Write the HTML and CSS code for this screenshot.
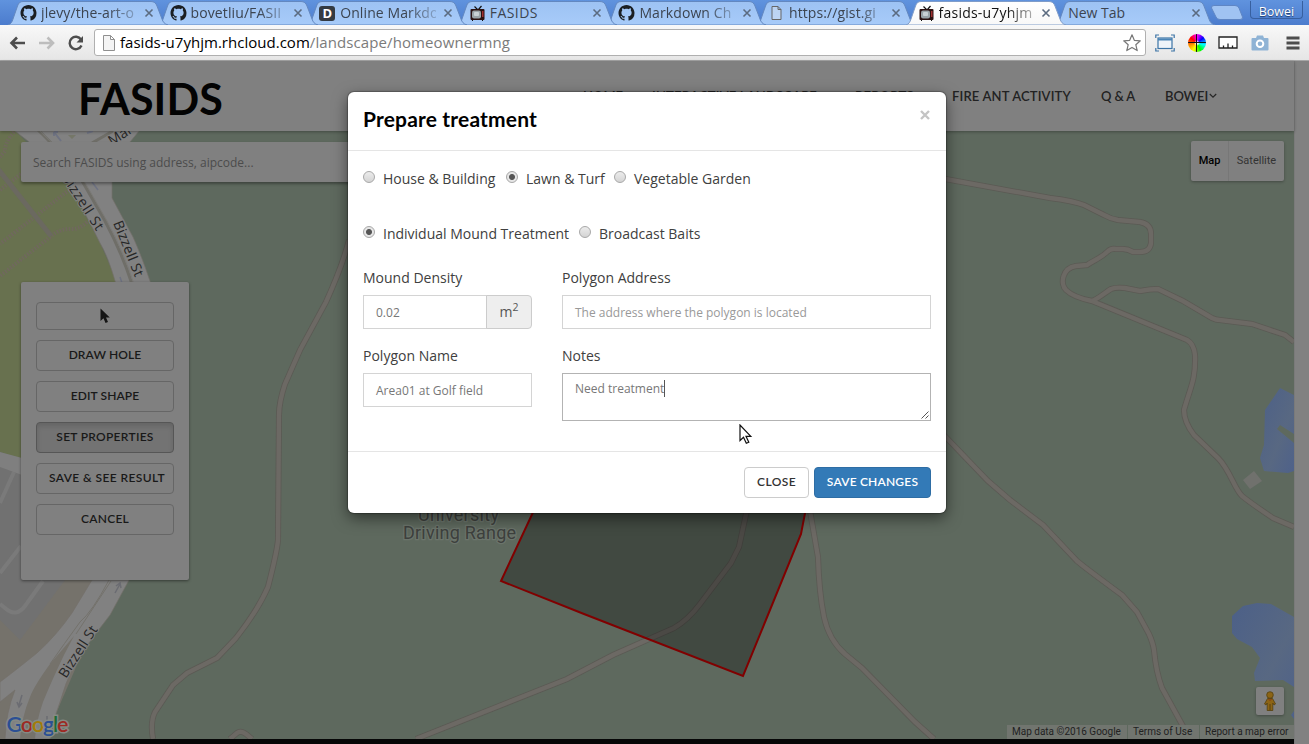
FILE: index.html
```html
<!DOCTYPE html>
<html lang="en">
<head>
<meta charset="utf-8">
<title>FASIDS</title>
<link rel="stylesheet" href="styles.css">
</head>
<body>
<svg class="defs" width="0" height="0">
  <defs>
    <linearGradient id="tabFill" x1="0" y1="0" x2="0" y2="1"><stop offset="0" stop-color="#9dc2f3"/><stop offset="1" stop-color="#a7cbf9"/></linearGradient>
    <linearGradient id="tabOn" x1="0" y1="0" x2="0" y2="1"><stop offset="0" stop-color="#ffffff"/><stop offset="1" stop-color="#f8f8f8"/></linearGradient>
    <symbol id="shape" viewBox="0 0 160 25"><path d="M0 25C3 24 4 22 5 19L9.500 6C10.500 3 12 1.500 15 1.500H143C146 1.500 148 3 149 6L154 19C155 22 156.500 24 160 25Z"/></symbol>
    <symbol id="github" viewBox="0 0 16 16"><path fill="#1b1f23" d="M8 0C3.580 0 0 3.580 0 8c0 3.540 2.290 6.530 5.470 7.590.4.070.55-.17.55-.38 0-.19-.01-.82-.01-1.490-2.010.37-2.530-.49-2.690-.94-.09-.23-.48-.94-.82-1.130-.28-.15-.68-.52-.01-.53.63-.01 1.080.58 1.230.82.72 1.210 1.870.87 2.330.66.07-.52.28-.87.51-1.070-1.780-.2-3.640-.89-3.640-3.950 0-.87.31-1.590.82-2.150-.08-.2-.36-1.020.08-2.120 0 0 .67-.21 2.200.82.64-.18 1.320-.27 2-.27s1.360.09 2 .27c1.530-1.040 2.200-.82 2.200-.82.44 1.100.16 1.920.08 2.120.51.56.82 1.270.82 2.150 0 3.070-1.870 3.750-3.650 3.950.29.25.54.73.54 1.480 0 1.070-.01 1.930-.01 2.200 0 .21.15.46.55.38A8.010 8.010 0 0 0 16 8c0-4.420-3.580-8-8-8z"/></symbol>
    <symbol id="tv" viewBox="0 0 16 16"><path d="M8 4.500L5 1.500M9 4.500L12 1" stroke="#111" stroke-width="1.200"/><rect x="1" y="4" width="14" height="11" rx="1" fill="#2a1010"/><rect x="2.500" y="5.500" width="9" height="8" rx="2" fill="#9aa3a8"/><rect x="4.500" y="7" width="5" height="4" rx="1" fill="#c9d0d4"/><rect x="12.500" y="6" width="1.500" height="6" fill="#a03030"/><path d="M3 15v1M13 15v1" stroke="#111"/></symbol>
    <symbol id="sheet" viewBox="0 0 16 16"><path d="M3.500 1.500H9.500L12.500 4.500V14.500H3.500ZM9.500 1.500V4.500H12.500" fill="#eee" fill-opacity=".35" stroke="#666"/></symbol>
    <symbol id="x" viewBox="0 0 10 10"><path d="M1.500 1.500L8.500 8.500M8.500 1.500L1.500 8.500" stroke="#5b6b80" stroke-width="1.600"/></symbol>
    <symbol id="caret" viewBox="0 0 8 6"><path d="M.8 1L4 4.200L7.200 1" fill="none" stroke="#262626" stroke-width="1.200"/></symbol>
  </defs>
</svg>
<div class="browser">
  <div class="tabstrip">
    <div class="tab t1"><svg class="shape"><use href="#shape"/></svg><svg class="fav"><use href="#github"/></svg><span class="title fade">jlevy/the-art-o</span><svg class="close"><use href="#x"/></svg></div>
    <div class="tab t2"><svg class="shape"><use href="#shape"/></svg><svg class="fav"><use href="#github"/></svg><span class="title fade">bovetliu/FASII</span><svg class="close"><use href="#x"/></svg></div>
    <div class="tab t3"><svg class="shape"><use href="#shape"/></svg><span class="fav letter">D</span><span class="title fade">Online Markdo</span><svg class="close"><use href="#x"/></svg></div>
    <div class="tab t4"><svg class="shape"><use href="#shape"/></svg><svg class="fav"><use href="#tv"/></svg><span class="title wide">FASIDS</span><svg class="close"><use href="#x"/></svg></div>
    <div class="tab t5"><svg class="shape"><use href="#shape"/></svg><svg class="fav"><use href="#github"/></svg><span class="title fade">Markdown Ch</span><svg class="close"><use href="#x"/></svg></div>
    <div class="tab t6"><svg class="shape"><use href="#shape"/></svg><svg class="fav"><use href="#sheet"/></svg><span class="title fade">https://gist.gi</span><svg class="close"><use href="#x"/></svg></div>
    <div class="tab t7 on"><svg class="shape"><use href="#shape"/></svg><svg class="fav"><use href="#tv"/></svg><span class="title fade">fasids-u7yhjm</span><svg class="close"><use href="#x"/></svg></div>
    <div class="tab t8 blank"><svg class="shape"><use href="#shape"/></svg><span class="title">New Tab</span><svg class="close"><use href="#x"/></svg></div>
    <svg class="plus" width="34" height="18" viewBox="0 0 34 18"><path d="M4 1.500H25Q28 1.500 29 4L32.500 13Q33 15.500 30 15.500H10Q7 15.500 6 13L1.500 4Q1 1.500 4 1.500Z" fill="#a0c3f2" stroke="#5f86c4"/></svg>
    <span class="profile">Bowei</span>
  </div>
  <div class="toolbar">
    <svg class="nav-ico" width="90" height="24" viewBox="0 0 90 24" fill="none">
      <path d="M25 12H12M17 6.500L11.500 12L17 17.500" stroke="#4d4d4d" stroke-width="2.600"/>
      <path d="M39 12H52M47.500 6.500L53 12L47.500 17.500" stroke="#bdbdbd" stroke-width="2.600"/>
      <path d="M81 8.500A6.200 6.200 0 1 0 81.500 14.500" stroke="#4d4d4d" stroke-width="2.400"/><path d="M83 5V11.500H76.500Z" fill="#4d4d4d"/>
    </svg>
    <div class="omnibox">
      <svg width="14" height="18" viewBox="0 0 14 18"><path d="M1.500 1.500H8.500L12.500 5.500V16.500H1.500ZM8.500 1.500V5.500H12.500" fill="#f4f4f4" stroke="#8f8f8f"/></svg>
      <span class="url"><b>fasids-u7yhjm.rhcloud.com</b>/landscape/homeownermng</span>
      <svg width="20" height="20" viewBox="0 0 20 20"><path d="M10 1.800L12.300 7.300L18.300 7.800L13.800 11.700L15.200 17.600L10 14.400L4.800 17.600L6.200 11.700L1.700 7.800L7.700 7.300Z" fill="#fff" stroke="#777" stroke-width="1.200" stroke-linejoin="round"/></svg>
    </div>
    <div class="exts">
      <svg width="20" height="18" viewBox="0 0 20 18" fill="none"><path d="M.8 4V1H4M16 1H19.200V4M.8 14V17H4M16 17H19.200V14" stroke="#3c74a6" stroke-width="1.200"/><rect x="3" y="4" width="14" height="10.500" stroke="#3c74a6" stroke-width="1.200" fill="#eef4fa"/><path d="M3 5.500H17" stroke="#4a84b6" stroke-width="2"/></svg>
      <span class="wheel"></span>
      <svg width="20" height="13" viewBox="0 0 20 13"><path d="M1 1H19V12H1ZM5.500 12V9.500M10 12V7.500M14.500 12V9.500" fill="#fff" stroke="#222" stroke-width="1.300"/></svg>
      <svg width="18" height="16" viewBox="0 0 18 16"><path d="M1.500 3H5L6 .5H12L13 3H16.500Q17.500 3 17.500 4V14.500Q17.500 15.500 16.500 15.500H1.500Q.5 15.500 .5 14.500V4Q.5 3 1.500 3Z" fill="#8fb3d5"/><circle cx="9" cy="8.700" r="3.300" fill="#8fb3d5" stroke="#fff" stroke-width="2"/></svg>
      <svg class="menu" width="14" height="14" viewBox="0 0 14 14"><path d="M.5 2H13.500M.5 7H13.500M.5 12H13.500" stroke="#4d4d4d" stroke-width="2.800"/></svg>
    </div>
  </div>
  <div class="viewport">
    <div class="page">
      <header class="site">
        <h1>FASIDS</h1>
        <nav>
          <a class="n1">HOME</a><a class="n2">INTERACTIVE LANDSCAPE<svg width="8" height="6"><use href="#caret"/></svg></a><a class="n3">REPORTS<svg width="8" height="6"><use href="#caret"/></svg></a><a class="n4">FIRE ANT ACTIVITY</a><a class="n5">Q &amp; A</a><a class="n6">BOWEI<svg width="8" height="6"><use href="#caret"/></svg></a>
        </nav>
      </header>
      <main class="map">
        <svg class="canvas" viewBox="0 131 1294 608" width="1294" height="608" fill="none">
          <defs>
            <linearGradient id="lake" x1="0" y1="0" x2="1" y2="1"><stop offset="0" stop-color="#4c6088"/><stop offset=".6" stop-color="#586882"/><stop offset="1" stop-color="#4e618a"/></linearGradient>
            <g id="trails">
              <path d="M940 178L1050 198Q1074 201 1084 205L1104 215Q1111 219 1118 220L1140 222Q1151 224 1151 234V243Q1150 252 1140 252H1133Q1128 249 1123 249H1116Q1111 248 1107 252C1101 258 1094 260 1087 265L1076 266C1062 268 1060 284 1066 290C1072 296 1082 299 1092 301L1187 340Q1194 344 1195 355C1196 380 1190 388 1184 410Q1184 422 1194 435L1218 458C1230 470 1234 488 1242 496Q1252 504 1273 518L1294 527"/>
              <path d="M1092 301C1098 299 1106 292 1111 289Q1116 287 1125 288L1140 291Q1150 289 1158 289L1183 301L1212 318Q1216 320 1220 320L1252 324L1285 335L1294 342"/>
              <path d="M940 431L988 481L1010 500L1043 525L1077 561Q1084 567 1122 595L1137 612L1149 634Q1153 643 1154 650Q1156 672 1162 688L1190 739"/>
              <path d="M349 240C344 260 336 280 326 302L300 350Q292 368 285 384Q279 402 279 415L278 540Q277 552 268 587Q258 610 236 638L217 658L187 673L173 685L155 712Q150 722 153 739"/>
              <path d="M230 739L237 733Q241 730 246 734L252 739"/>
              <path d="M416 739L567 679L613 655L674 628Q688 620 700 604L731 563L739 547L748 505"/>
              <path d="M809 505L818 557Q819 592 824 617Q829 640 845 654L862 668L915 722L934 739"/>
            </g>
          </defs>
          <rect x="0" y="131" width="1294" height="608" fill="#5e695e"/>
          <path d="M0 131H15L68 183L100 243L125 300L70 470L20 458L0 452Z" fill="#68714f"/>
          <path d="M0 460L20 470L105 560V600L45 739H0Z" fill="#75726b"/>
          <path d="M0 465L20 474L80 560L62 584L20 640L0 620Z" fill="#717171"/>
          <path d="M14 472L0 503M43 581L25 606Q16 618 5 608L0 604M21 546L0 573" stroke="#7a7a7a" stroke-width="4"/>
          <path d="M0 452L22 458V475L0 467Z" fill="#7f7f7f"/>
          <g stroke="#70685e" stroke-width="4" stroke-dasharray="1.500 1.600">
            <path d="M14 132Q5 142 5 151L0 157M21 174L0 190M69 190L0 244M87 222Q80 229 72 229Q60 228 50 237L0 276"/>
          </g>
          <path d="M-2 169L51 236" stroke="#6b6960" stroke-width="5"/>
          <path d="M15 131H139L112 164V198L133 237Q142 257 151 284H116Q108 256 100 243Q88 218 68 183Q42 150 15 131Z" fill="#818181" stroke="#74706a" stroke-width=".7"/>
          <path d="M38 130Q72 163 85 186L105 221Q122 253 132 284M113 131L92 143" stroke="#6f6e68" stroke-width="3"/>
          <path d="M40 131Q74 163 87 186L107 221Q124 253 134 284" stroke="#7a7975" stroke-width="1"/>
          <path d="M54 132V136M54 132H58M54 132L61 141M87 133L93 131" stroke="#6e7282" stroke-width="2"/><path d="M68 135H76L72 139Z" fill="#757768"/><path d="M92 182L98 190M120 277L122 283" stroke="#6e7282" stroke-width="1.500"/>
          <path d="M92 580L72 613Q56 636 37 653Q16 670 0 682V702L15 690Q6 712 5 739H50Q52 724 60 702Q65 684 74 665Q90 640 110 615L129 580Z" fill="#818181" stroke="#74706a" stroke-width=".7"/>
          <path d="M50 664Q34 686 30 697Q22 716 20 739H35Q36 722 43 702Q52 680 64 655L74 636Z" fill="#75726b"/>
          <path d="M109 580Q92 612 80 622Q64 644 50 664M111 581L76 634" stroke="#74726c"/>
          <path d="M115 593L120 584M116 586L120 583L121 588M22 695L19 705M17 702L19 707L22 703M47 716V722" stroke="#6b6c72" stroke-width="1.500"/>
          <g font-family="'Open Sans',sans-serif" font-size="14" fill="#262626" stroke="#818181" stroke-width="2" paint-order="stroke">
            <text transform="translate(61 177) rotate(57)" textLength="65">Bizzell St</text>
            <text transform="translate(113 223) rotate(68)" textLength="59">Bizzell St</text>
            <text transform="translate(66 679) rotate(-57)" textLength="59">Bizzell St</text>
            <text transform="translate(112 146) rotate(-33)">Mai</text>
          </g>
          <use href="#trails" stroke="#5b5a54" stroke-width="6"/>
          <use href="#trails" stroke="#6c6964" stroke-width="4.400"/>
          <path d="M1280 388L1294 395V434L1280 425L1277 429L1294 443V471L1288 473L1264 471L1260 458L1264 445L1265 410Z" fill="url(#lake)"/>
          <path d="M1232 616L1243 606L1257 603L1271 604L1294 617V687L1283 680L1255 681L1254 673L1260 658L1252 647L1237 639L1232 633ZM1294 711L1291 715L1294 719Z" fill="url(#lake)"/>
          <path d="M1243 480L1254 471L1262 481L1250 489Z" fill="#70716d"/>
          <path d="M535 508L501 581L584 614L743 676L801 534L806 508Z" fill="#000" fill-opacity=".3" stroke="#800000" stroke-width="2"/>
          <g font-family="Roboto,sans-serif" font-size="18" fill="#3d403d" stroke="#6b746b" stroke-width="2.500" paint-order="stroke" text-anchor="middle">
            <text x="458.500" y="520.500" textLength="81">University</text>
            <text x="459.500" y="538.500" textLength="113">Driving Range</text>
          </g>
          <text x="6.500" y="732" font-family="Lato,sans-serif" font-size="21.500" font-weight="600" textLength="62" stroke="#858a85" stroke-width="3" paint-order="stroke"><tspan fill="#2b4f94">G</tspan><tspan fill="#9c2a24">o</tspan><tspan fill="#a37c08">o</tspan><tspan fill="#2b4f94">g</tspan><tspan fill="#1e6b34">l</tspan><tspan fill="#9c2a24">e</tspan></text>
        </svg>
        <div class="search">Search FASIDS using address, aipcode...</div>
        <div class="tools">
          <button class="tool first"><svg width="10" height="16" viewBox="0 0 10 16"><path d="M.5 .5V13L3.500 10.300L5.500 15L8 14L6 9.500H9.800Z" fill="#151515"/></svg></button>
          <button class="tool snug">DRAW HOLE</button>
          <button class="tool snug">EDIT SHAPE</button>
          <button class="tool pressed">SET PROPERTIES</button>
          <button class="tool shifted">SAVE &amp; SEE RESULT</button>
          <button class="tool">CANCEL</button>
        </div>
        <div class="maptype"><b>Map</b><span>Satellite</span></div>
        <div class="pegman"><svg width="14" height="20" viewBox="0 0 14 20"><g fill="#8c6414" stroke="#54400f" stroke-width=".8"><path d="M4.500 7.500H9.500L12.500 13L11 14L9.800 12V19.500H4.200V12L3 14L1.500 13Z"/><circle cx="7" cy="4" r="3.300"/></g><path d="M7 13V19" stroke="#54400f"/><path d="M5.500 8L7 9.500L8.500 8" stroke="#8c3010" fill="none"/></svg></div>
        <div class="credits"><span class="c1">Map data ©2016 Google</span><span class="c2">Terms of Use</span><span class="c3">Report a map error</span></div>
      </main>
      <div class="base"></div>
    </div>
    <div class="scroll"></div>
    <section class="modal">
      <div class="m-head"><h4>Prepare treatment</h4><svg width="10" height="10" viewBox="0 0 10 10"><path d="M1 1L9 9M9 1L1 9" stroke="#c4c4c4" stroke-width="2.400"/></svg></div>
      <div class="m-body">
        <div class="radios">
          <label class="r1"><i></i>House &amp; Building</label>
          <label class="r2"><i class="sel"></i>Lawn &amp; Turf</label>
          <label><i></i>Vegetable Garden</label>
        </div>
        <div class="radios second">
          <label class="r4"><i class="sel"></i>Individual Mound Treatment</label>
          <label><i></i>Broadcast Baits</label>
        </div>
        <div class="fields">
          <div class="field"><label>Mound Density</label><div class="group"><div class="input">0.02</div><div class="addon">m<sup>2</sup></div></div></div>
          <div class="field"><label>Polygon Address</label><div class="input hint">The address where the polygon is located</div></div>
          <div class="field"><label>Polygon Name</label><div class="input">Area01 at Golf field</div></div>
          <div class="field"><label>Notes</label><div class="input area">Need treatment<i class="bar"></i><svg class="grip" width="8" height="8" viewBox="0 0 8 8"><path d="M.5 7.500L7.500 .5M4.500 7.500L7.500 4.500" stroke="#555"/></svg></div></div>
        </div>
      </div>
      <div class="m-foot"><button class="btn">CLOSE</button><button class="btn primary">SAVE CHANGES</button></div>
    </section>
    <svg class="pointer" width="14" height="21" viewBox="0 0 14 21"><path d="M1 1V16.500L4.500 13.200L7.300 19.300L9.800 18.200L7 12.300H11.800Z" fill="#fff" stroke="#111" stroke-width="1.200"/></svg>
  </div>
</div>
</body>
</html>
```
FILE: styles.css
```css
* { box-sizing: border-box; }
body { margin: 0; width: 1309px; height: 744px; overflow: hidden; font-family: "Open Sans", sans-serif; }
svg { display: block; flex: none; }
h1, h4 { margin: 0; }
button { font: inherit; padding: 0; margin: 0; }
.defs { position: absolute; }
.browser { display: flex; flex-direction: column; width: 1309px; height: 744px; }

.tabstrip { position: relative; display: flex; height: 25px; padding-left: 8px; background: linear-gradient(#6093de, #4c7ccd); flex: none; }
.tab { position: relative; display: flex; align-items: center; width: 149.600px; height: 25px; padding: 1px 0 0 12px; flex: none; }
.t1 { z-index: 8; } .t2 { z-index: 7; } .t3 { z-index: 6; } .t4 { z-index: 5; } .t5 { z-index: 4; } .t6 { z-index: 3; } .t7 { z-index: 9; } .t8 { z-index: 2; }
.shape { position: absolute; left: 0; top: 0; width: 160px; height: 25px; fill: url(#tabFill); stroke: #6388c0; overflow: visible; }
.on .shape { fill: url(#tabOn); stroke: #7f9cc9; }
.fav { position: relative; width: 17px; height: 16px; margin-right: 4px; }
.fav.letter { width: 16px; height: 15px; margin-right: 5px; border-radius: 3px; background: #333a42; color: #fff; font: bold 13px/15px "Open Sans", sans-serif; text-align: center; }
.title { position: relative; width: 96px; white-space: nowrap; font-size: 14px; line-height: 20px; letter-spacing: .1px; color: #3c4450; }
.title.wide { letter-spacing: .42px; }
.title.fade { -webkit-mask-image: linear-gradient(90deg, #000 70%, rgba(0,0,0,.25) 100%); mask-image: linear-gradient(90deg, #000 70%, rgba(0,0,0,.25) 100%); }
.on .title { color: #111; letter-spacing: .22px; }
.blank .title { width: 117px; letter-spacing: 0; padding-left: 1px; }
.close { position: relative; width: 10px; height: 10px; margin-left: 6.500px; }
.plus { margin: 4px 0 0 5px; }
.profile { position: absolute; right: 6px; top: 1px; width: 53px; height: 18px; border: 1px solid #38609f; border-top: 0; border-radius: 0 0 4px 4px; color: #fff; font-size: 12.500px; line-height: 21px; text-align: center; text-shadow: 0 1px 1px #1c3866; }

.toolbar { display: flex; align-items: center; height: 36px; padding-right: 9px; background: linear-gradient(#f8f8f8, #e6e6e6); border-bottom: 1px solid #a6a6a6; flex: none; }
.nav-ico { margin-right: 4px; }
.omnibox { display: flex; align-items: center; width: 1052px; height: 27px; padding: 0 3px 0 7px; background: #fff; border: 1px solid #b0b0b0; border-radius: 3px; }
.url { flex: 1; margin-left: 4px; padding-bottom: 2px; font-size: 15px; line-height: 22px; letter-spacing: .1px; color: #7b7b7b; white-space: nowrap; }
.url b { font-weight: 400; letter-spacing: .02px; color: #000; }
.exts { display: flex; align-items: center; gap: 12.500px; flex: 1; margin-left: 9px; }
.menu { margin-left: 5px; }
.wheel { width: 18px; height: 18px; border-radius: 50%; background: linear-gradient(#111, #111) center/1px 18px no-repeat, linear-gradient(#111, #111) center/18px 1px no-repeat, radial-gradient(#fff 1px, transparent 3px), conic-gradient(#f0f, #00f, #0ff, #0f0, #ff0, #f80, #f00, #f0f); }

.viewport { position: relative; display: flex; height: 683px; }
.page { width: 1294px; display: flex; flex-direction: column; }
.scroll { width: 15px; background: #818181; border-left: 1px solid #7a7a7a; }
.site { display: flex; justify-content: space-between; align-items: center; height: 70px; padding: 0 77px 0 78px; background: #808080; flex: none; box-shadow: 0 1px 3px rgba(0,0,0,.3); position: relative; z-index: 1; }
.site h1 { font: bold 43px/70px Lato, sans-serif; color: #030303; padding-top: 5px; letter-spacing: .12px; white-space: nowrap; }
.site nav { display: flex; gap: 30px; padding-bottom: 1px; font: 600 13px/18px Lato, sans-serif; color: #222; white-space: nowrap; }
.site nav a { display: flex; align-items: center; justify-content: space-between; }
.n1 { width: 39px; } .n2 { width: 173px; letter-spacing: .18px; } .n3 { width: 67px; letter-spacing: .29px; } .n4 { width: 119px; letter-spacing: .16px; } .n5 { width: 34px; letter-spacing: -.15px; } .n6 { width: 52px; letter-spacing: -.1px; }

.map { position: relative; height: 608px; overflow: hidden; flex: none; }
.canvas { position: absolute; left: 0; top: 0; }
.base { flex: 1; background: #060707; }
.search { position: absolute; left: 21px; top: 11px; width: 400px; height: 40px; padding-left: 12px; border-radius: 2px; background: #808080; box-shadow: 0 2px 3px rgba(0,0,0,.35); color: #4c4c4c; font-size: 12px; line-height: 41px; white-space: nowrap; }
.tools { position: absolute; left: 21px; top: 151px; width: 168px; height: 298px; padding: 20px 15px; display: flex; flex-direction: column; gap: 10px; border-radius: 2px; background: #808080; box-shadow: 0 1px 3px rgba(0,0,0,.45); }
.tool { display: flex; align-items: center; justify-content: center; height: 31px; padding-bottom: 2px; border: 1px solid #666; border-radius: 4px; background: #808080; color: #191919; font: 600 12px/18px Lato, sans-serif; letter-spacing: .28px; white-space: nowrap; flex: none; }
.tool.first { height: 28px; padding: 0; }
.tool.snug { letter-spacing: .1px; }
.tool.pressed { background: #737373; border-color: #565656; box-shadow: inset 0 3px 5px rgba(0,0,0,.125); }
.tool.shifted { padding-left: 4px; letter-spacing: .4px; }
.maptype { position: absolute; left: 1191px; top: 10px; display: flex; width: 93px; height: 40px; border-radius: 2px; background: #808080; box-shadow: 0 1px 3px rgba(0,0,0,.3); font: 11px/39px Roboto, sans-serif; color: #333; text-align: center; white-space: nowrap; }
.maptype b { width: 37px; color: #000; font-weight: 500; }
.maptype > span { flex: 1; border-left: 1px solid #777; }
.pegman { position: absolute; left: 1256px; top: 556px; width: 28px; height: 28px; display: flex; align-items: center; justify-content: center; border-radius: 2px; background: #808080; box-shadow: 0 1px 3px rgba(0,0,0,.3); }
.credits { position: absolute; right: 0; bottom: 0; display: flex; height: 14px; font: 10px/14px Roboto, sans-serif; color: #222; white-space: nowrap; }
.credits > span { background: #71756f; padding-left: 5px; }
.c1 { width: 120px; } .c2 { width: 72px; border-left: 1px solid #5e695e; } .c3 { width: 95px; border-left: 1px solid #5e695e; }

.modal { position: absolute; z-index: 3; left: 348px; top: 31px; width: 598px; height: 421px; display: flex; flex-direction: column; border-radius: 6px; background: #fff; box-shadow: 0 0 1px 1px rgba(0,0,0,.25), 0 5px 15px rgba(0,0,0,.5); color: #404040; }
.m-head { display: flex; justify-content: space-between; height: 59px; padding: 14px 16px 0 15px; border-bottom: 1px solid #e5e5e5; flex: none; }
.m-head h4 { font: bold 21px/26px Lato, sans-serif; letter-spacing: .17px; color: #000; white-space: nowrap; }
.m-head svg { margin-top: 4px; }
.m-body { height: 300px; padding: 15px; flex: none; }
.radios { display: flex; height: 55px; font-size: 14px; line-height: 26px; white-space: nowrap; }
.radios label { display: flex; }
.radios i { width: 12px; height: 12px; margin: 5px 8px 0 0; border: 1px solid #a8a8a8; border-radius: 50%; background: linear-gradient(#ececec, #d4d4d4); flex: none; }
.radios i.sel { background: radial-gradient(#555 2.500px, transparent 3.500px), #e6e6e6; }
.r1 { width: 143px; } .r2 { width: 108px; } .r4 { width: 216px; }
.second { height: 45px; }
.fields { display: grid; grid-template-columns: 169px 369px; column-gap: 30px; row-gap: 15px; grid-template-rows: 63px 63px; }
.field > label { display: block; height: 29px; font-size: 14px; line-height: 24px; white-space: nowrap; }
.group { display: flex; }
.group .input { width: 125px; }
.input { height: 34px; padding: 0 12px; border: 1px solid #d4d4d4; font-size: 12px; line-height: 33px; color: #777; white-space: nowrap; }
.hint { color: #999; }
.addon { width: 46px; height: 34px; margin-left: -2px; border: 1px solid #ccc; border-radius: 0 4px 4px 0; background: #eee; color: #555; font-size: 14px; line-height: 32px; text-align: center; }
.addon sup { font-size: 10.500px; line-height: 0; }
.area { position: relative; display: flex; height: 48px; border-color: #b3b3b3; line-height: 29px; }
.bar { width: 1px; height: 17px; margin-top: 6px; background: #555; }
.grip { position: absolute; right: 1px; bottom: 1px; }
.m-foot { display: flex; justify-content: flex-end; gap: 5px; padding: 15px; border-top: 1px solid #e5e5e5; flex: 1; }
.btn { width: 65px; height: 31px; padding-bottom: 1px; border: 1px solid #ccc; border-radius: 4px; background: #fff; color: #333; font: 600 12px/18px Lato, sans-serif; letter-spacing: .4px; white-space: nowrap; }
.primary { width: 117px; letter-spacing: .2px; background: #337ab7; border-color: #2e6da4; color: #fff; }
.pointer { position: absolute; z-index: 4; left: 738.500px; top: 363px; }
```
